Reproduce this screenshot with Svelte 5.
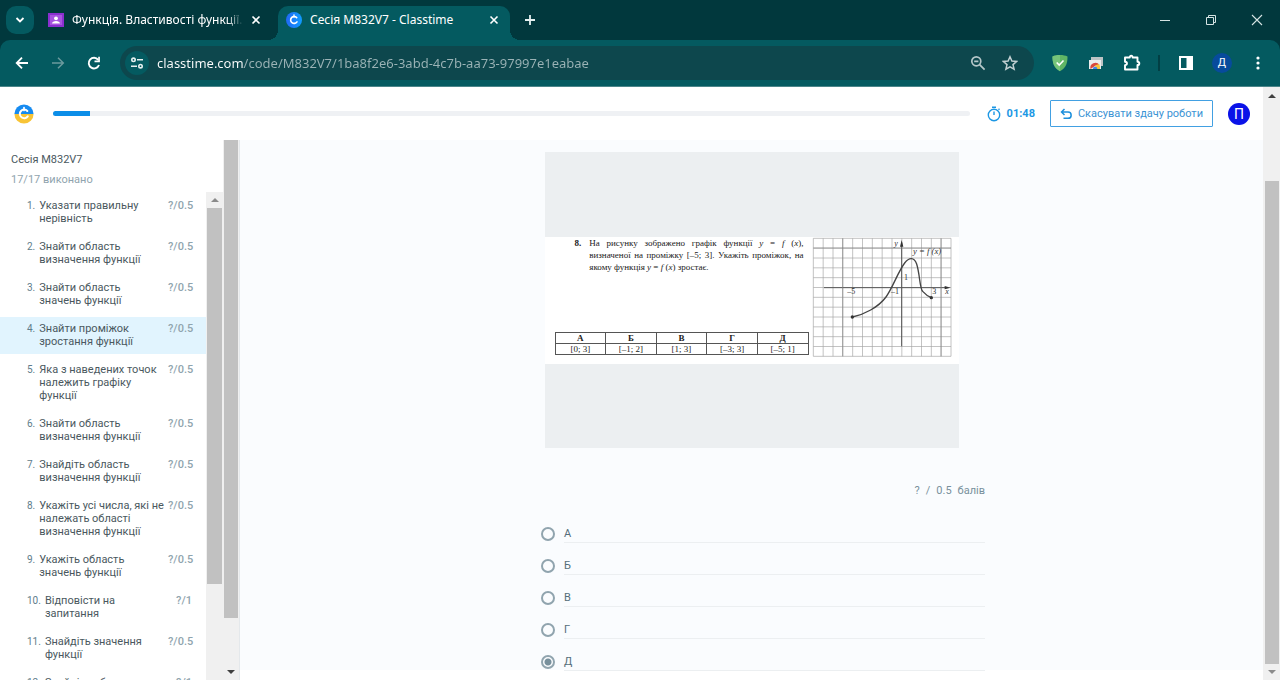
<script>
  const questions = [
    { title: 'Указати правильну нерівність', score: '?/0.5' },
    { title: 'Знайти область визначення функції', score: '?/0.5' },
    { title: 'Знайти область значень функції', score: '?/0.5' },
    { title: 'Знайти проміжок зростання функції', score: '?/0.5' },
    { title: 'Яка з наведених точок належить графіку функції', score: '?/0.5' },
    { title: 'Знайти область визначення функції', score: '?/0.5' },
    { title: 'Знайдіть область визначення функції', score: '?/0.5' },
    { title: 'Укажіть усі числа, які не належать області визначення функції', score: '?/0.5' },
    { title: 'Укажіть область значень функції', score: '?/0.5' },
    { title: 'Відповісти на запитання', score: '?/1' },
    { title: 'Знайдіть значення функції', score: '?/0.5' },
    { title: 'Знайдіть область', score: '?/1' }
  ];
  const options = ['А', 'Б', 'В', 'Г', 'Д'];
  const ranges = ['[0; 3]', '[–1; 2]', '[1; 3]', '[–3; 3]', '[–5; 1]'];
  const columns = Array.from({ length: 15 }, (_, i) => 40 + i * 29.5);
  const rows = Array.from({ length: 13 }, (_, i) => 31 + i * 29.5);
  let selected = $state('Д');
  let current = $state(3);
  let address = $state('classtime.com/code/M832V7/1ba8f2e6-3abd-4c7b-aa73-97997e1eabae');
</script>

{#snippet ring()}
  <path d="M16 8.4A5.200 5.200 0 1 0 16.500 14.800" fill="none" stroke="#fff" stroke-width="2.400" stroke-linecap="round" />
  <path d="M12 4.200v3.500" stroke="#fff" stroke-width="2" stroke-linecap="round" />
{/snippet}

<div class="window">
  <div class="tabs">
    <button class="search" aria-label="Пошук вкладок">
      <svg width="10" height="10" viewBox="0 0 10 10"><path d="M1.500 3 5 6.500 8.500 3" fill="none" stroke="#fff" stroke-width="1.800" /></svg>
    </button>
    <div class="tab">
      <svg width="16" height="16" viewBox="0 0 16 16"><path fill="#8b2fd0" d="M0 1h16v14H0z" /><path fill="#a653df" d="M2 3h12v10H2z" /><circle cx="8" cy="6.300" r="1.900" fill="#fff" /><path fill="#fff" d="M4 11.500c0-3.500 8-3.500 8 0z" /></svg>
      <span class="caption fade">Функція. Властивості функції. Т</span>
      <button class="close" aria-label="Закрити вкладку"><svg width="10" height="10" viewBox="0 0 10 10"><path d="m1.500 1.500 7 7m0-7-7 7" stroke="#fff" stroke-width="1.600" /></svg></button>
    </div>
    <div class="tab active">
      <svg width="16" height="16" viewBox="0 0 24 24"><defs><linearGradient id="blue"><stop stop-color="#2168f3" /><stop offset="1" stop-color="#109cff" /></linearGradient></defs><circle cx="12" cy="12" r="12" fill="url(#blue)" />{@render ring()}</svg>
      <span class="caption">Сесія M832V7 - Classtime</span>
      <button class="close" aria-label="Закрити вкладку"><svg width="10" height="10" viewBox="0 0 10 10"><path d="m1.500 1.500 7 7m0-7-7 7" stroke="#fff" stroke-width="1.600" /></svg></button>
    </div>
    <button class="plus" aria-label="Нова вкладка"><svg width="12" height="12" viewBox="0 0 12 12"><path d="M6 1v10M1 6h10" stroke="#e4f0f0" stroke-width="1.800" /></svg></button>
    <div class="controls">
      <button aria-label="Згорнути"><svg width="12" height="12" viewBox="0 0 12 12"><path d="M1 6.500h10" stroke="#d5e3e3" /></svg></button>
      <button aria-label="Відновити"><svg width="12" height="12" viewBox="0 0 12 12"><path d="M1.500 3.500h7v7h-7zM3.500 3.500v-2h7v7h-2" fill="none" stroke="#d5e3e3" /></svg></button>
      <button aria-label="Закрити"><svg width="12" height="12" viewBox="0 0 12 12"><path d="m1 1 10 10m0-10L1 11" stroke="#d5e3e3" stroke-width="1.100" /></svg></button>
    </div>
  </div>

  <div class="toolbar">
    <div class="nav">
      <button aria-label="Назад"><svg width="16" height="16" viewBox="0 0 16 16"><path d="M14 8H3m5-5.300L2.700 8 8 13.300" fill="none" stroke="#fff" stroke-width="1.800" /></svg></button>
      <button aria-label="Вперед"><svg width="16" height="16" viewBox="0 0 16 16"><path d="M2 8h11M8 2.700 13.300 8 8 13.300" fill="none" stroke="#6b9a9d" stroke-width="1.500" /></svg></button>
      <button aria-label="Оновити"><svg width="16" height="16" viewBox="0 0 16 16"><path d="M13 10a5.300 5.300 0 1 1-.800-5.200" fill="none" stroke="#fff" stroke-width="1.900" /><path d="M13.900 1.800v5.400H8.500V5.500h3.700V1.800z" fill="#fff" /></svg></button>
    </div>
    <div class="omnibox">
      <button class="site" aria-label="Відомості про сайт"><svg width="14" height="14" viewBox="0 0 14 14" fill="none" stroke="#e6f0f0" stroke-width="1.600"><circle cx="3.500" cy="3.800" r="1.700" /><path d="M7 3.800h6M1 10.200h6" /><circle cx="10.500" cy="10.200" r="1.700" /></svg></button>
      <input class="address" aria-label="Адреса" bind:value={address} spellcheck="false" />
      <button aria-label="Масштаб"><svg width="16" height="16" viewBox="0 0 16 16" fill="none" stroke="#b5c7c9" stroke-width="1.700"><circle cx="6.300" cy="6.300" r="4.500" /><path d="m9.600 9.600 5 5M4.200 6.300h4.200" /></svg></button>
      <button aria-label="Закладка"><svg width="16" height="16" viewBox="0 0 16 16"><path d="m8 1.800 1.900 4.300 4.700.4-3.600 3.100 1.100 4.600L8 11.800l-4.100 2.400L5 9.600 1.400 6.500l4.700-.4z" fill="none" stroke="#c1d0d2" stroke-width="1.500" /></svg></button>
    </div>
    <div class="extensions">
      <button aria-label="Захист"><svg width="18" height="18" viewBox="0 0 18 18"><path d="M9 1c3 0 5.500.5 7.500 1.500 0 6-1 11-7.500 14.800C2.500 13.500 1.500 8.500 1.500 2.500 3.500 1.500 6 1 9 1" fill="#60b565" /><path d="M9 1v16.300C2.500 13.500 1.500 8.500 1.500 2.500 3.500 1.500 6 1 9 1" fill="#76c47a" /><path d="m5.700 8.500 2.500 2.500 4.300-4.500" fill="none" stroke="#fff" stroke-width="1.600" /></svg></button>
      <button aria-label="Розширення"><svg width="16" height="16" viewBox="0 0 16 16"><path fill="#bdc3c5" d="M3 2h12v9H3z" /><path fill="#eceeee" d="M1 5h12v9H1z" /><path fill="#d84a3f" d="M2.500 14a5 5 0 0 1 9-4L7 11z" /><path fill="#f5c63c" d="M7 10.500 11 9q1.500 2 1 5H8z" /><path fill="#4085e8" d="M4.800 14a2.300 2.300 0 0 1 4.600 0z" /></svg></button>
      <button aria-label="Усі розширення"><svg width="18" height="18" viewBox="0 0 18 18"><path d="M2 3.500h4.800c-.2-2.400 3-2.400 2.800 0H14.500v4.300c2.400 0 2.400 3.200 0 3.200v4.500H2v-4.300c2.600-.3 2.600-3.100 0-3.400z" fill="none" stroke="#fff" stroke-width="1.900" stroke-linejoin="round" /></svg></button>
      <span class="divider"></span>
      <button aria-label="Бічна панель"><svg width="16" height="16" viewBox="0 0 16 16"><path fill="#fff" fill-rule="evenodd" d="M1 1h14v14H1zM3 3v10h5.500V3z" /></svg></button>
      <button aria-label="Профіль"><span class="profile">Д</span></button>
      <button aria-label="Меню"><svg width="4" height="16" viewBox="0 0 4 16" fill="#fff"><circle cx="2" cy="3" r="1.600" /><circle cx="2" cy="8" r="1.600" /><circle cx="2" cy="13" r="1.600" /></svg></button>
    </div>
  </div>

  <div class="page">
    <div class="site-body">
      <header>
        <svg width="20" height="20" viewBox="0 0 24 24"><defs><linearGradient id="flag" x2="0" y2="1"><stop offset=".5" stop-color="#168bf1" /><stop offset=".5" stop-color="#f8c436" /></linearGradient></defs><circle cx="12" cy="12" r="11.500" fill="url(#flag)" />{@render ring()}</svg>
        <div class="progress" role="progressbar" aria-label="Перебіг" aria-valuenow="4" aria-valuemin="0" aria-valuemax="100"><div style:width="4%"></div></div>
        <div class="timer">
          <svg width="16" height="16" viewBox="0 0 16 16" fill="none" stroke="#1c97e4" stroke-width="1.400"><circle cx="8" cy="9" r="5.700" /><path d="M8 5.500V9M6 1.200h4m2.500 2.500 1-1" /></svg>
          <span>01:48</span>
        </div>
        <button class="undo">
          <svg width="12" height="12" viewBox="0 0 12 12" fill="none" stroke="#1c8fdc" stroke-width="1.500"><path d="M4.500 1 1.500 4l3 3M1.500 4H8a3 3 0 0 1 0 6.300H3.500" /></svg>
          Скасувати здачу роботи
        </button>
        <button class="avatar">П</button>
      </header>

      <div class="columns">
        <aside>
          <div class="session">
            <h1>Сесія M832V7</h1>
            <p>17/17 виконано</p>
            <div class="scroller">
              <ol>
                {#each questions as question, i}
                  <li>
                    <button class="question" class:current={current === i} onclick={() => (current = i)}>
                      <span class="number">{i + 1}.</span>
                      <span class="title">{question.title}</span>
                      <span class="score">{question.score}</span>
                    </button>
                  </li>
                {/each}
              </ol>
              <div class="bar inner">
                <svg width="8" height="4" viewBox="0 0 8 4"><path d="m0 4 4-4 4 4z" fill="#8b8b8b" /></svg>
                <div class="thumb"></div>
              </div>
            </div>
          </div>
          <div class="bar outer">
            <div class="thumb"></div>
            <svg width="8" height="4" viewBox="0 0 8 4"><path d="m0 0 4 4 4-4z" fill="#404040" /></svg>
          </div>
        </aside>

        <main>
          <div class="content">
            <div class="picture">
              <div class="sheet">
                <div class="task">
                  <div class="statement">
                    <b>8.</b>
                    <p>На рисунку зображено графік функції <i>y</i> = <i>f</i> (<i>x</i>), визначеної на проміжку [–5; 3]. Укажіть проміжок, на якому функція <i>y</i> = <i>f</i> (<i>x</i>) зростає.</p>
                  </div>
                  <table>
                    <thead><tr>{#each options as option}<th>{option}</th>{/each}</tr></thead>
                    <tbody><tr>{#each ranges as range}<td>{range}</td>{/each}</tr></tbody>
                  </table>
                </div>
                <svg class="graph" width="140" height="121" viewBox="36 27 420 363" role="img" aria-label="Графік функції">
                  <g stroke="#a5a5a5" stroke-width="2">
                    {#each columns as x}<path d="M{x} 31V385" />{/each}
                    {#each rows as y}<path d="M40 {y}H453" />{/each}
                  </g>
                  <path d="M72 179H442M305 355V44" stroke="#555" stroke-width="3" fill="none" />
                  <path d="M128 31V385M423 31V385M40 60H453" stroke="#808080" stroke-width="2" fill="none" />
                  <path d="m452 179-18-5v10zM305 36l-5 20h10z" fill="#333" />
                  <path d="M157 267C192 260 235 238 258 207C280 176 292 135 314 105C328 87 342 87 350 108C360 140 359 182 368 190C377 200 386 206 394 209" fill="none" stroke="#444" stroke-width="4" />
                  <circle cx="157" cy="267" r="5" fill="#333" /><circle cx="394" cy="209" r="5" fill="#333" />
                  <g fill="#333" font-family="'Liberation Serif', serif" font-size="24">
                    <text x="142" y="197">–5</text><text x="273" y="198">–1</text><text x="312" y="155">1</text><text x="397" y="197">3</text>
                    <g font-style="italic"><text x="283" y="55">y</text><text x="436" y="197">x</text><text x="339" y="79" font-size="26">y = f (x)</text></g>
                  </g>
                </svg>
              </div>
            </div>
            <p class="points"><span>?</span><span>/</span><span>0.5</span><span>балів</span></p>
            <div class="answers" role="radiogroup" aria-label="Відповідь">
              {#each options as option}
                <label><input type="radio" name="answer" value={option} bind:group={selected} /><span>{option}</span></label>
              {/each}
            </div>
          </div>
        </main>
      </div>
    </div>
    <div class="bar page-bar">
      <svg width="8" height="4" viewBox="0 0 8 4"><path d="m0 4 4-4 4 4z" fill="#404040" /></svg>
      <div class="thumb"></div>
      <svg width="8" height="4" viewBox="0 0 8 4"><path d="m0 0 4 4 4-4z" fill="#8b8b8b" /></svg>
    </div>
  </div>
</div>

<style>
  * { box-sizing: border-box; }
  button { display: flex; align-items: center; justify-content: center; padding: 0; border: 0; background: none; color: inherit; font: inherit; cursor: pointer; }
  svg { flex: none; display: block; }
  h1, p, ol { margin: 0; padding: 0; }
  .window { display: flex; flex-direction: column; height: 100vh; overflow: hidden; font-family: Roboto, sans-serif; font-size: 11px; color: #4a585e; background: #fff; }

  .tabs { flex: none; display: flex; height: 40px; padding-left: 6px; background: #01383d; color: #fff; font: 12px 'Noto Sans', sans-serif; }
  .search { width: 28px; height: 28px; margin-top: 6px; border-radius: 10px; background: #045a60; }
  .tab { display: flex; align-items: center; gap: 8px; width: 232px; height: 34px; margin: 6px 0 0 6px; padding: 0 11px 6px 8px; }
  .tab.active { position: relative; background: #045a60; border-radius: 10px 10px 0 0; }
  .tab.active::before, .tab.active::after { content: ''; position: absolute; bottom: 0; width: 10px; height: 10px; }
  .tab.active::before { right: 100%; background: radial-gradient(circle at 0 0, transparent 10px, #045a60 10px); }
  .tab.active::after { left: 100%; background: radial-gradient(circle at 100% 0, transparent 10px, #045a60 10px); }
  .caption { flex: 1; min-width: 0; overflow: hidden; white-space: nowrap; line-height: 20px; }
  .fade { mask-image: linear-gradient(90deg, #000 calc(100% - 16px), transparent); }
  .close { width: 10px; height: 16px; }
  .plus { width: 28px; height: 40px; margin-left: 6px; }
  .controls { display: flex; margin-left: auto; }
  .controls button { width: 46px; height: 40px; }

  .toolbar { flex: none; display: flex; align-items: center; height: 47px; padding-right: 4px; border-bottom: 1px solid #4b8589; background: #045a60; box-shadow: 0 -10px #01383d; border-radius: 10px 10px 0 0; }
  .tabs { position: relative; z-index: 1; }
  .nav { display: flex; gap: 8px; padding: 0 12px 0 8px; }
  .nav button { width: 28px; height: 28px; }
  .omnibox { flex: 1; display: flex; align-items: center; gap: 16px; height: 34px; padding: 0 16px 0 5px; border-radius: 17px; background: #0d474d; }
  .site { width: 24px; height: 24px; border-radius: 50%; background: #045a60; }
  .address { flex: 1; min-width: 0; margin-left: -8px; padding: 0; border: 0; outline: 0; font: 13px 'Noto Sans', sans-serif; color: transparent; background: linear-gradient(90deg, #fff 87px, #9bb3b6 87px); background-clip: text; }
  .extensions { display: flex; align-items: center; margin-left: 8px; }
  .extensions button { width: 36px; height: 28px; }
  .divider { width: 2px; height: 16px; margin: 0 8px; background: #023f44; }
  .profile { width: 20px; border-radius: 50%; line-height: 20px; background: #074b9c; color: #fff; }

  .page { flex: 1; min-height: 0; display: flex; }
  .site-body { flex: 1; min-width: 0; display: flex; flex-direction: column; }
  header { flex: none; display: flex; align-items: center; height: 53px; padding: 0 13px 0 14px; }
  .progress { flex: 1; height: 5px; margin: 0 16px 0 19px; border-radius: 3px; background: #eff1f4; overflow: hidden; }
  .progress div { height: 100%; background: #0c8ee8; }
  .timer { display: flex; align-items: center; gap: 5px; margin-right: 15px; color: #1c97e4; font-weight: 700; }
  .undo { gap: 6px; height: 27px; padding: 0 9px; border: 1px solid #42a0e2; color: #3b93d4; border-radius: 1px; }
  .avatar { width: 22px; height: 22px; margin-left: 15px; border-radius: 50%; background: #0a12e8; color: #fff; font-size: 14px; }

  .columns { flex: 1; min-height: 0; display: flex; }
  aside { flex: none; display: flex; width: 240px; border-right: 1px solid #e4e8eb; }
  .session { flex: 1; min-width: 0; display: flex; flex-direction: column; padding-top: 12px; }
  h1 { padding-left: 11px; font-size: 11px; font-weight: 400; line-height: 15px; }
  .session > p { padding: 5px 0 5px 11px; line-height: 15px; color: #90a4ae; }
  .scroller { flex: 1; min-height: 0; display: flex; }
  ol { flex: 1; min-width: 0; overflow: hidden; list-style: none; }
  li { padding: 2px 0; }
  .question { width: 100%; gap: 4px; align-items: flex-start; padding: 5px 14px 6px 27px; line-height: 13px; text-align: left; }
  .question.current { background: #e1f4fe; }
  .number { font-size: 10px; color: #607d8b; }
  .title { flex: 1; }
  .score { width: 24px; color: #90a4ae; font-weight: 500; text-align: right; white-space: nowrap; }

  .bar { flex: none; display: flex; flex-direction: column; align-items: center; background: #f0f0f0; }
  .thumb { background: #c1c1c1; }
  .inner { width: 17px; gap: 6px; padding-top: 6px; }
  .inner .thumb { width: 15px; height: calc(100% - 106px); }
  .outer { width: 16px; justify-content: space-between; padding-bottom: 6px; }
  .outer .thumb { width: 14px; height: calc(100% - 56px); }
  .page-bar { width: 17px; padding: 7px 0 6px; gap: 6px; }
  .page-bar .thumb { flex: 1; width: 14px; margin-top: 77px; }

  main { flex: 1; min-width: 0; display: flex; justify-content: center; align-items: flex-start; margin-bottom: 10px; padding: 12px 20px 0; background: #fafcfe; }
  .content { width: 100%; max-width: 467px; }
  .picture { max-width: 414px; margin: 0 auto; padding: 85px 0 84px; background: #eceff1; }
  .sheet { display: flex; justify-content: space-between; align-items: flex-start; height: 127px; padding: 0 7px 0 10px; background: #fff; font: 9px 'Liberation Serif', serif; color: #222; }
  .task { display: flex; flex-direction: column; justify-content: space-between; width: 254px; height: 118px; }
  .statement { display: flex; gap: 8px; padding: 0 5px 0 20px; line-height: 12px; }
  .statement p { flex: 1; text-align: justify; }
  table { width: 100%; table-layout: fixed; border-collapse: collapse; text-align: center; }
  th, td { height: 11px; padding: 0; border: 1px solid #555; line-height: 10px; }

  .points { display: flex; justify-content: flex-end; gap: 6px; margin-top: 35px; line-height: 16px; color: #78909c; }
  .answers { margin-top: 19px; padding-left: 23px; }
  label { display: flex; align-items: center; gap: 9px; height: 32px; color: #546e7a; }
  label span { flex: 1; height: 32px; line-height: 32px; background: linear-gradient(#eceff1, #eceff1) 0 24px / 100% 1px no-repeat; }
  input[type='radio'] { appearance: none; width: 14px; height: 14px; margin: 0; border: 2px solid #90a4ae; border-radius: 50%; }
  input[type='radio']:checked { background: radial-gradient(circle, #78909c 3px, transparent 4px); }
</style>
